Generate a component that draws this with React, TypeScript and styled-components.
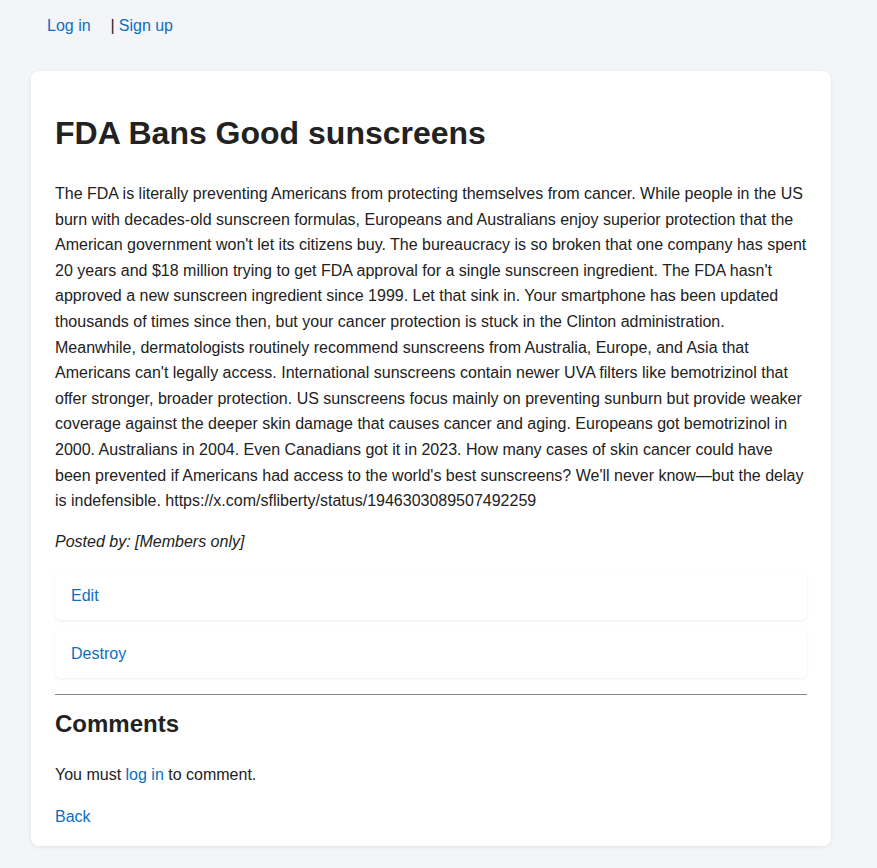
import styled, { createGlobalStyle } from "styled-components";

const GlobalStyle = createGlobalStyle`
  body {
    margin: 0;
    background: #f4f5f9;
    font-family: "Liberation Sans", Arial, sans-serif;
    color: #222;
  }
  a {
    color: #0b6fbf;
    text-decoration: none;
  }
`;

const Nav = styled.nav`
  display: flex;
  align-items: center;
  padding: 15px 47px;
  font-size: 16px;
  line-height: 22px;
`;

const Separator = styled.span`
  margin-left: 20px;
  margin-right: 4px;
  color: #222;
`;

const Card = styled.main`
  max-width: 752px;
  margin: 19px 0 22px 31px;
  background: #fff;
  border-radius: 8px;
  padding: 24px 24px 18px;
  box-shadow: 0 1px 4px rgba(0, 0, 0, 0.08);
`;

const Title = styled.h1`
  font-size: 32px;
  font-weight: bold;
  margin: 20px 0 29px;
  line-height: 37px;
`;

const Body = styled.p`
  font-size: 16px;
  line-height: 25.6px;
  margin: 0 0 17px;
`;

const Byline = styled.p`
  font-style: italic;
  font-size: 16px;
  margin: 0 0 19px;
  line-height: 22px;
`;

const ActionBox = styled.div`
  background: #fff;
  border-radius: 6px;
  box-shadow: 0 1px 3px rgba(0, 0, 0, 0.07);
  padding: 13px 16px;
  margin-bottom: 10px;
  font-size: 16px;
  line-height: 22px;
`;

const Rule = styled.hr`
  border: none;
  border-top: 1px solid #888;
  margin: 16px 0 13px;
`;

const SubTitle = styled.h2`
  font-size: 24px;
  font-weight: bold;
  margin: 0 0 24px;
  line-height: 32px;
`;

const Note = styled.p`
  font-size: 16px;
  line-height: 22px;
  margin: 0 0 20px;

  &:last-child {
    margin-bottom: 0;
  }
`;

const text =
  "The FDA is literally preventing Americans from protecting themselves from cancer. While people in the US burn with decades-old sunscreen formulas, Europeans and Australians enjoy superior protection that the American government won't let its citizens buy. The bureaucracy is so broken that one company has spent 20 years and $18 million trying to get FDA approval for a single sunscreen ingredient. The FDA hasn't approved a new sunscreen ingredient since 1999. Let that sink in. Your smartphone has been updated thousands of times since then, but your cancer protection is stuck in the Clinton administration. Meanwhile, dermatologists routinely recommend sunscreens from Australia, Europe, and Asia that Americans can't legally access. International sunscreens contain newer UVA filters like bemotrizinol that offer stronger, broader protection. US sunscreens focus mainly on preventing sunburn but provide weaker coverage against the deeper skin damage that causes cancer and aging. Europeans got bemotrizinol in 2000. Australians in 2004. Even Canadians got it in 2023. How many cases of skin cancer could have been prevented if Americans had access to the world's best sunscreens? We'll never know\u2014but the delay is indefensible. https://x.com/sfliberty/status/1946303089507492259";

export default function App() {
  return (
    <>
      <GlobalStyle />
      <Nav>
        <a href="#">Log in</a>
        <Separator>|</Separator>
        <a href="#">Sign up</a>
      </Nav>
      <Card>
        <Title>FDA Bans Good sunscreens</Title>
        <Body>{text}</Body>
        <Byline>Posted by: [Members only]</Byline>
        <ActionBox>
          <a href="#">Edit</a>
        </ActionBox>
        <ActionBox>
          <a href="#">Destroy</a>
        </ActionBox>
        <Rule />
        <SubTitle>Comments</SubTitle>
        <Note>
          You must <a href="#">log in</a> to comment.
        </Note>
        <Note>
          <a href="#">Back</a>
        </Note>
      </Card>
    </>
  );
}
